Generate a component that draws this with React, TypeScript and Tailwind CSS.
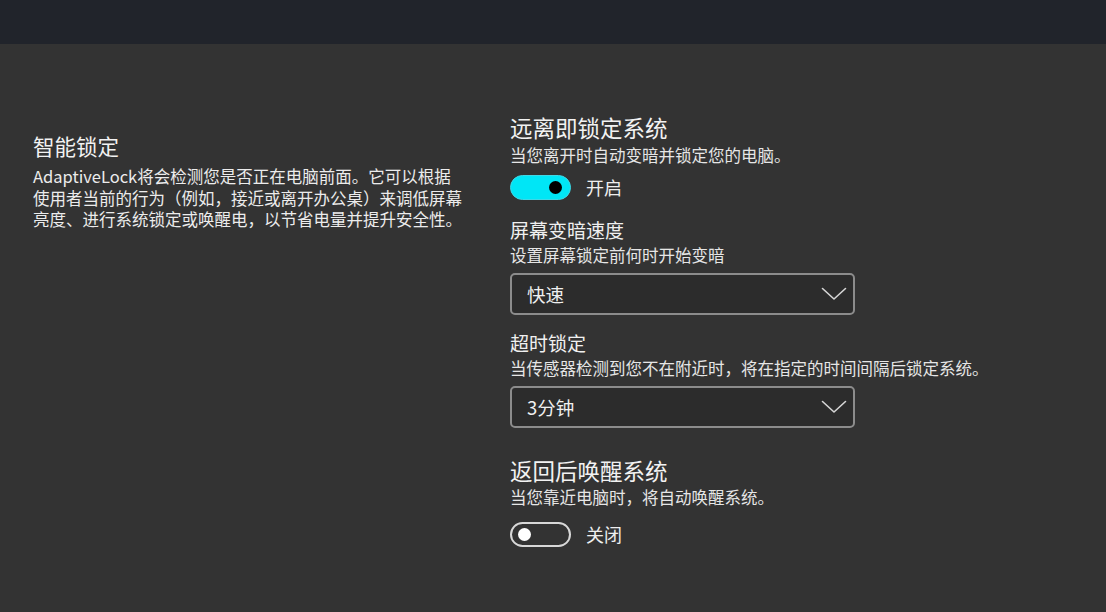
const font = { fontFamily: '"Noto Sans CJK SC", "Noto Sans", sans-serif' };

function Toggle({ on, label }: { on: boolean; label: string }) {
  return (
    <div className="flex items-center gap-[15px]">
      {on ? (
        <div className="flex h-[25px] w-[61px] items-center justify-end rounded-full border border-[#3fd8e6] bg-[#00e6f6] pr-[8px]">
          <div className="h-[13px] w-[13px] rounded-full bg-black" />
        </div>
      ) : (
        <div className="flex h-[25px] w-[61px] items-center rounded-full border-2 border-[#d8d8d8] pl-[6px]">
          <div className="h-[13px] w-[13px] rounded-full bg-white" />
        </div>
      )}
      <span className="text-[18px] leading-[25px] text-[#eeeeee]">{label}</span>
    </div>
  );
}

function Select({ value }: { value: string }) {
  return (
    <div className="flex h-[42px] w-[345px] items-center justify-between rounded-[5px] border-2 border-[#8c8c8c] bg-[#2c2c2c] pl-[15px] pr-[6px]">
      <span className="text-[18.5px] leading-[26px] text-[#f0f0f0]">{value}</span>
      <svg width="26" height="14" viewBox="0 0 26 14" fill="none">
        <path d="M1.5 1.5 L13 12 L24.5 1.5" stroke="#d6d6d6" strokeWidth="1.6" strokeLinecap="round" strokeLinejoin="round" />
      </svg>
    </div>
  );
}

export default function App() {
  return (
    <div className="min-h-[612px] w-full bg-[#333333]" style={font}>
      <div className="h-[44px] w-full bg-[#21242b]" />

      <div className="flex">
        <section className="w-[477px] shrink-0 pl-[33px] pt-[88px]">
          <h2 className="text-[21.5px] leading-[28px] text-[#f2f2f2]">智能锁定</h2>
          <div className="mt-[6px] text-[16.5px] leading-[21.5px] text-[#ececec]">
            <p className="whitespace-nowrap">AdaptiveLock将会检测您是否正在电脑前面。它可以根据</p>
            <p className="whitespace-nowrap">使用者当前的行为（例如，接近或离开办公桌）来调低屏幕</p>
            <p className="whitespace-nowrap">亮度、进行系统锁定或唤醒电，以节省电量并提升安全性。</p>
          </div>
        </section>

        <section className="flex flex-col pl-[33px] pt-[69px]">
          <h2 className="text-[22.5px] leading-[28px] text-[#f2f2f2]">远离即锁定系统</h2>
          <p className="mt-[3px] text-[16.5px] leading-[22px] text-[#e6e6e6]">当您离开时自动变暗并锁定您的电脑。</p>
          <div className="mt-[9px]">
            <Toggle on label="开启" />
          </div>

          <h3 className="mt-[17px] text-[19px] leading-[26px] text-[#f0f0f0]">屏幕变暗速度</h3>
          <p className="mt-[1px] text-[16.5px] leading-[22px] text-[#e6e6e6]">设置屏幕锁定前何时开始变暗</p>
          <div className="mt-[7px]">
            <Select value="快速" />
          </div>

          <h3 className="mt-[15px] text-[19px] leading-[26px] text-[#f0f0f0]">超时锁定</h3>
          <p className="mt-[1px] text-[16.5px] leading-[22px] text-[#e6e6e6]">
            当传感器检测到您不在附近时，将在指定的时间间隔后锁定系统。
          </p>
          <div className="mt-[7px]">
            <Select value="3分钟" />
          </div>

          <h2 className="mt-[28px] text-[22.5px] leading-[28px] text-[#f2f2f2]">返回后唤醒系统</h2>
          <p className="mt-[2px] text-[16.5px] leading-[22px] text-[#e6e6e6]">当您靠近电脑时，将自动唤醒系统。</p>
          <div className="mt-[14px]">
            <Toggle on={false} label="关闭" />
          </div>
        </section>
      </div>
    </div>
  );
}
